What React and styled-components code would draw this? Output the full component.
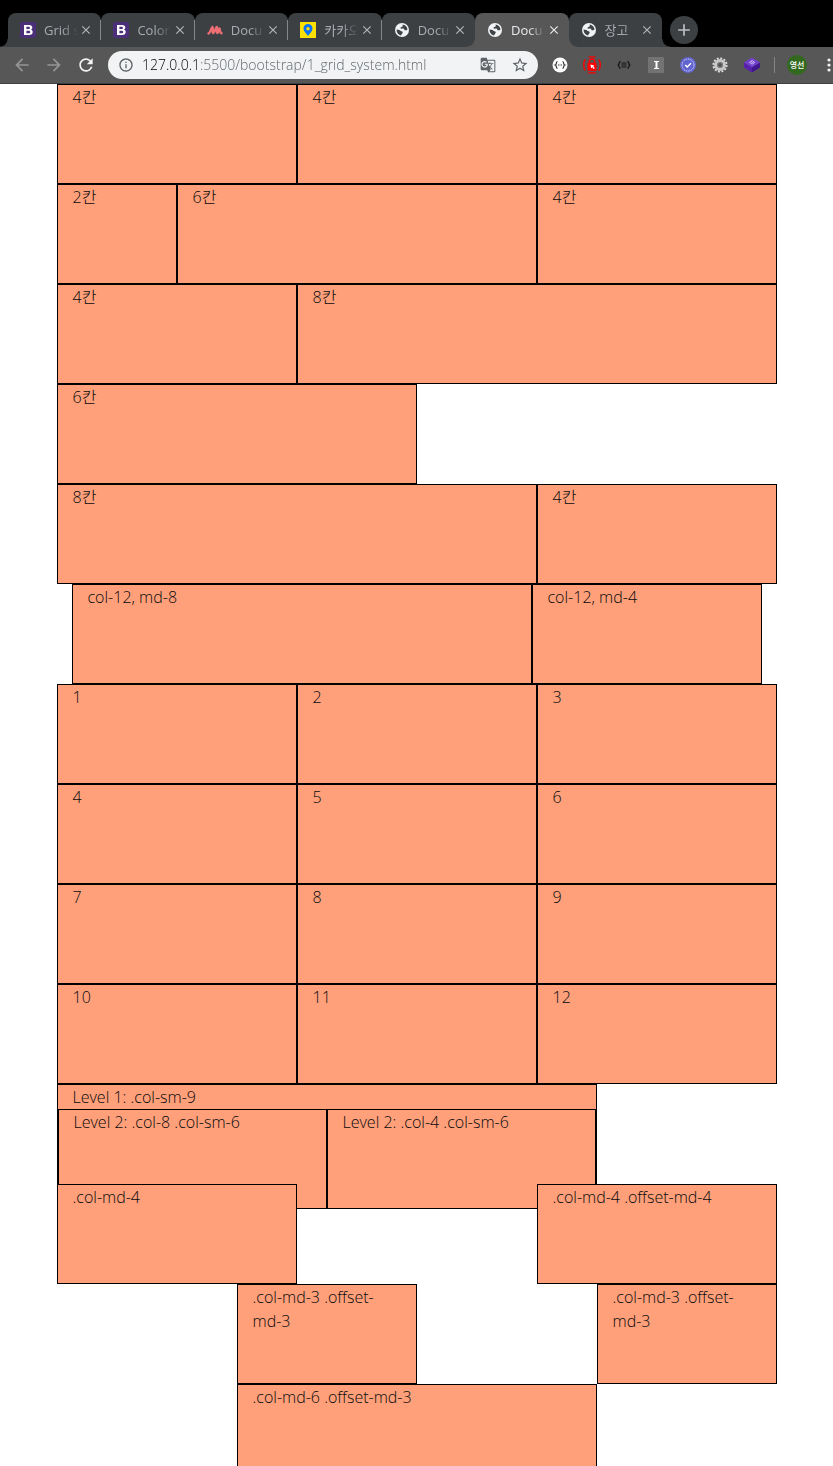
import React from "react";
import styled, { createGlobalStyle, css } from "styled-components";
import {
  MdArrowBack,
  MdArrowForward,
  MdRefresh,
  MdInfoOutline,
  MdGTranslate,
  MdStarBorder,
  MdClose,
  MdAdd,
} from "react-icons/md";

const FONT = '"Open Sans", "Noto Sans CJK KR", sans-serif';

const GlobalStyle = createGlobalStyle`
  *, *::before, *::after { box-sizing: border-box; }
  body { margin: 0; background: #fff; font-family: ${FONT}; }
  button, input { font-family: inherit; }
`;

const Window = styled.div`
  display: flex;
  flex-direction: column;
  height: 100vh;
  overflow: hidden;
`;

const TabStrip = styled.header`
  display: flex;
  flex: none;
  align-items: center;
  padding: 13px 8px 0;
  background: #000;
`;

const TabList = styled.div`
  display: flex;
  flex: 0 1 654px;
  min-width: 0;
`;

const flare = (side, color) => css`
  content: "";
  position: absolute;
  bottom: 0;
  ${side}: -8px;
  width: 8px;
  height: 8px;
  background: radial-gradient(
    circle at ${side === "left" ? "0 0" : "100% 0"},
    transparent 7px,
    ${color} 8px
  );
`;

const activeTab = css`
  z-index: 1;
  background: #575757;
  color: #e8eaed;

  &::before { ${flare("left", "#575757")} }
  &::after { ${flare("right", "#575757")} }
`;

const inactiveTab = css`
  background: #3c4043;
  color: #a9adb1;

  &:first-child::before { ${flare("left", "#3c4043")} }
  &:last-child::after { ${flare("right", "#3c4043")} }
`;

const Tab = styled.div`
  position: relative;
  display: flex;
  flex: 1 1 0;
  align-items: center;
  min-width: 0;
  height: 34px;
  padding: 0 8px 0 12px;
  border-radius: 8px 8px 0 0;
  ${(p) => (p.$active ? activeTab : inactiveTab)}
`;

const TabDivider = styled.span`
  position: absolute;
  right: 0;
  top: 7px;
  width: 1px;
  height: 20px;
  background: #85888b;
`;

const TabButton = styled.button`
  display: flex;
  flex: 1;
  align-items: center;
  gap: 8px;
  min-width: 0;
  padding: 0;
  border: 0;
  background: none;
  color: inherit;
  font-size: 13px;
  line-height: 18px;
  svg { flex: none; }
`;

const TabTitle = styled.span`
  flex: 1;
  overflow: hidden;
  white-space: nowrap;
  text-align: left;
  mask-image: linear-gradient(90deg, #000 18px, transparent 34px);
`;

const CloseButton = styled.button`
  display: flex;
  flex: none;
  padding: 0;
  border: 0;
  background: none;
  color: ${(p) => (p.$active ? "#e8eaed" : "#b4b7ba")};
`;

const NewTabButton = styled.button`
  display: flex;
  flex: none;
  align-items: center;
  justify-content: center;
  width: 28px;
  height: 28px;
  margin-left: 8px;
  padding: 0;
  border: 0;
  border-radius: 50%;
  background: #3c4043;
  color: #bdc1c6;
`;

const Toolbar = styled.nav`
  display: flex;
  flex: none;
  align-items: center;
  height: 37px;
  padding-left: 6px;
  border-bottom: 1px solid #404040;
  background: #575757;
`;

const ToolButton = styled.button`
  display: flex;
  flex: none;
  align-items: center;
  justify-content: center;
  width: 32px;
  height: 28px;
  padding: 0;
  border: 0;
  background: none;
  color: ${(p) => (p.$muted ? "#959595" : "#f1f3f4")};
`;

const AddressBar = styled.label`
  display: flex;
  flex: 1;
  align-items: center;
  min-width: 0;
  height: 28px;
  margin: 0 6px;
  padding: 0 2px 0 10px;
  border-radius: 14px;
  background: #f1f3f4;
  color: #5f6368;
`;

const AddressInput = styled.input`
  flex: 1;
  min-width: 0;
  margin-left: 8px;
  padding: 0;
  border: 0;
  outline: 0;
  background: linear-gradient(90deg, #000 56px, #5a5f64 56px);
  background-clip: text;
  -webkit-text-fill-color: transparent;
  font-size: 14px;
  font-weight: 300;
  line-height: 20px;
`;

const ToolDivider = styled.span`
  flex: none;
  width: 1px;
  height: 16px;
  margin: 0 6px;
  background: #858585;
`;

const Avatar = styled.span`
  display: flex;
  align-items: center;
  justify-content: center;
  width: 20px;
  height: 20px;
  border-radius: 50%;
  background: #33691e;
  color: #fff;
  font-size: 8px;
  font-weight: 500;
  line-height: 12px;
`;

const MenuButton = styled(ToolButton)`
  justify-content: flex-end;
  width: 20px;
`;

const Viewport = styled.main`
  flex: 1;
  min-height: 0;
  overflow: auto;
  scrollbar-width: none;
`;

const Container = styled.div`
  max-width: 720px;
  margin: 0 auto;
`;

const Row = styled.div`
  display: flex;
  flex-wrap: wrap;
  padding: 0 ${(p) => (p.$inset ? "15px" : "0")};
`;

const NestedRow = styled(Row)`
  margin: 0 -15px;
`;

const Col = styled.div`
  position: relative;
  flex: 0 0 ${(p) => (p.$span / 12) * 100}%;
  height: 100px;
  margin-left: ${(p) => ((p.$offset || 0) / 12) * 100}%;
  padding: 0 15px;
  border: 1px solid #000;
  background: #ffa07a;
  color: #080a0c;
  font-size: 16px;
  font-weight: 300;
  line-height: 24px;
`;

const BootstrapIcon = () => (
  <svg width="16" height="16" viewBox="0 0 16 16">
    <rect width="16" height="16" rx="2" fill="#4b2f78" />
    <path
      fill="#fff"
      fillRule="evenodd"
      d="M4 3h5c2.200 0 3.300 1 3.300 2.600 0 1-.5 1.700-1.400 2.100 1.200.3 1.800 1.200 1.800 2.400C12.700 12 11.400 13 9.200 13H4zm2.400 1.800v2.200h2c1 0 1.500-.4 1.500-1.100S9.400 4.800 8.500 4.800zm0 3.900v2.500h2.300c1 0 1.500-.5 1.500-1.300 0-.8-.6-1.200-1.600-1.200z"
    />
  </svg>
);

const WaveIcon = () => (
  <svg width="16" height="16" viewBox="0 0 16 16" fill="none" stroke="#ee6e73" strokeWidth="2.400" strokeLinecap="round" strokeLinejoin="round">
    <path d="M1.500 11.500C3.500 11 4 6 5.500 5c1 1-.7 5.500.7 6 1.800-.5 2-5 3.600-6 1.200 1-.7 5.500.6 6 1-.2 1-3.500 2-4.500.9.800.2 4.500 2.100 4.800" />
  </svg>
);

const MapIcon = () => (
  <svg width="16" height="16" viewBox="0 0 16 16">
    <rect width="16" height="16" fill="#fde003" />
    <path fill="#0b72f5" fillRule="evenodd" d="M8 2a4.500 4.500 0 0 1 4.500 4.500C12.500 9.500 10 11 8 14 6 11 3.500 9.500 3.500 6.500A4.500 4.500 0 0 1 8 2zm0 3a1.700 1.700 0 1 0 0 3.400A1.700 1.700 0 0 0 8 5z" />
  </svg>
);

const GlobeIcon = () => (
  <svg width="16" height="16" viewBox="0 0 16 16">
    <circle cx="8" cy="8" r="7" fill="#f1f3f4" />
    <path fill="#3f4347" d="M8.500 2.600c2.600.2 4.700 2.200 5 4.800-.8.900-1.900 1.200-2.700.8-.7-.4-.4-1.100-1.100-1.500-.8-.4-2 .3-2.900-.2-.7-.5-.1-1.400.7-1.600.9-.2 1.400-.4 1.300-1.100zM2.600 7.400c1 .2 1.900.1 2.800.6.8.4 1.200 1.100 2.100 1.300 1 .2 1.500.8 1.100 1.600-.4.700-1.100.8-1.400 2.500-2.700-.4-4.700-2.900-4.600-6z" />
  </svg>
);

const JsonIcon = () => (
  <svg width="16" height="16" viewBox="0 0 16 16">
    <circle cx="8" cy="8" r="7.500" fill="#fff" />
    <path d="M5.500 4.500C3.800 4.500 5 7.500 3.300 8 5 8.500 3.800 11.500 5.500 11.500M10.500 4.500c1.700 0 .5 3 2.200 3.500-1.700.5-.5 3.500-2.200 3.500" fill="none" stroke="#333" strokeWidth="1.200" />
    <path d="M6 8h1m.5 0h1m.5 0h1" stroke="#333" />
  </svg>
);

const LockIcon = () => (
  <svg width="18" height="18" viewBox="0 0 16 16" fill="none" stroke="#f00">
    <path d="M2 3C.2 5.800.2 10.200 2 13M14 3c1.800 2.800 1.800 7.200 0 10" strokeWidth="1.200" />
    <path d="M5 .8h6M4.500 15h7" strokeWidth="1.200" />
    <path d="M5.700 6V4.700c0-2.700 4.600-2.700 4.600 0V6" strokeWidth="1.400" />
    <rect x="4" y="6" width="8" height="7.200" fill="#f00" stroke="none" />
    <path d="M6.500 7.500 10 8.500l-.8.800 1.300 1.500-1 .8-1.200-1.500-1 .8z" fill="#fff" stroke="none" />
  </svg>
);

const BracesIcon = () => (
  <svg width="16" height="16" viewBox="0 0 16 16" fill="none" stroke="#161616" strokeWidth="1.300">
    <path d="M4.500 4.500C2.500 4.500 4 7.500 1.800 8c2.200.5.7 3.500 2.700 3.500M11.500 4.500c2 0 .5 3 2.700 3.500-2.200.5-.7 3.500-2.700 3.500" />
    <path d="M5.500 6h5M5.500 8h5M5.500 10h5" strokeWidth="1" />
  </svg>
);

const SerifIcon = () => (
  <svg width="16" height="16" viewBox="0 0 16 16">
    <rect width="16" height="16" rx="1" fill="#737373" />
    <path d="M6 4h5v1H9.500v6H11v1H6v-1h1.500V5H6z" fill="#fff" />
  </svg>
);

const CheckIcon = () => (
  <svg width="16" height="16" viewBox="0 0 16 16" fill="none">
    <circle cx="8" cy="8" r="8" fill="#6264cf" />
    <circle cx="8" cy="8" r="6" stroke="#d5d6f5" strokeDasharray="1.500 1" />
    <path d="m5.200 8 2 2L11 6.300" stroke="#fff" strokeWidth="1.500" />
  </svg>
);

const GearIcon = () => (
  <svg width="16" height="16" viewBox="0 0 16 16" fill="none">
    <circle cx="8" cy="8" r="6.600" stroke="#d9d9d9" strokeWidth="2" strokeDasharray="2 1.456" />
    <circle cx="8" cy="8" r="4.500" stroke="#c7c7c7" strokeWidth="3" />
    <circle cx="8" cy="8" r="2.500" fill="#555" stroke="#888" />
  </svg>
);

const CubeIcon = () => (
  <svg width="16" height="16" viewBox="0 0 16 16">
    <path d="m8 .5 8 5-8 5-8-5z" fill="#7440ce" />
    <path d="m0 5.500 8 5v5l-8-5z" fill="#5720ad" />
    <path d="m16 5.500-8 5v5l8-5z" fill="#421590" />
    <path d="m5.500 5.500 2.700-2 2.500 1.700-2.500 2zM7 4.500l2.500 1.800" fill="none" stroke="#cdb6f3" />
  </svg>
);

const DotsIcon = () => (
  <svg width="8" height="16" viewBox="0 0 8 16" fill="currentColor">
    <circle cx="4" cy="3" r="1.600" />
    <circle cx="4" cy="8" r="1.600" />
    <circle cx="4" cy="13" r="1.600" />
  </svg>
);

const tabs = [
  { title: "Grid s", icon: BootstrapIcon, divider: true },
  { title: "Color", icon: BootstrapIcon, divider: true },
  { title: "Docu", icon: WaveIcon, divider: true },
  { title: "카카오", icon: MapIcon, divider: true },
  { title: "Docu", icon: GlobeIcon },
  { title: "Docu", icon: GlobeIcon, active: true },
  { title: "장고", icon: GlobeIcon },
];

const extensions = [
  ["JSON viewer", JsonIcon],
  ["Lock", LockIcon],
  ["Formatter", BracesIcon],
  ["Reader", SerifIcon],
  ["Checker", CheckIcon],
  ["Options", GearIcon],
  ["Cube", CubeIcon],
];

const upperRows = [
  [[4, "4칸"], [4, "4칸"], [4, "4칸"]],
  [[2, "2칸"], [6, "6칸"], [4, "4칸"]],
  [[4, "4칸"], [8, "8칸"]],
  [[6, "6칸"]],
  [[8, "8칸"], [4, "4칸"]],
];

const lowerRows = [
  [[4, ".col-md-4"], [4, ".col-md-4 .offset-md-4", 4]],
  [[3, ".col-md-3 .offset-md-3", 3], [3, ".col-md-3 .offset-md-3", 3]],
  [[6, ".col-md-6 .offset-md-3", 3]],
];

const GridRow = ({ cols, inset }) => (
  <Row $inset={inset}>
    {cols.map(([span, text, offset], i) => (
      <Col key={i} $span={span} $offset={offset}>
        {text}
      </Col>
    ))}
  </Row>
);

export default function App() {
  return (
    <Window>
      <GlobalStyle />
      <TabStrip>
        <TabList>
          {tabs.map(({ title, icon: Icon, active, divider }, i) => (
            <Tab key={i} $active={active}>
              <TabButton type="button">
                <Icon />
                <TabTitle>{title}</TabTitle>
              </TabButton>
              <CloseButton type="button" aria-label="Close tab" $active={active}>
                <MdClose size={14} />
              </CloseButton>
              {divider && <TabDivider />}
            </Tab>
          ))}
        </TabList>
        <NewTabButton type="button" aria-label="New tab">
          <MdAdd size={20} />
        </NewTabButton>
      </TabStrip>
      <Toolbar>
        <ToolButton type="button" aria-label="Back" $muted>
          <MdArrowBack size={20} />
        </ToolButton>
        <ToolButton type="button" aria-label="Forward" $muted>
          <MdArrowForward size={20} />
        </ToolButton>
        <ToolButton type="button" aria-label="Reload">
          <MdRefresh size={20} />
        </ToolButton>
        <AddressBar>
          <MdInfoOutline size={16} />
          <AddressInput
            aria-label="Address"
            defaultValue="127.0.0.1:5500/bootstrap/1_grid_system.html"
            spellCheck={false}
          />
          <ToolButton as="span">
            <MdGTranslate size={16} color="#5f6368" />
          </ToolButton>
          <ToolButton as="span">
            <MdStarBorder size={18} color="#5f6368" />
          </ToolButton>
        </AddressBar>
        {extensions.map(([name, Icon]) => (
          <ToolButton key={name} type="button" aria-label={name}>
            <Icon />
          </ToolButton>
        ))}
        <ToolDivider />
        <ToolButton type="button">
          <Avatar>영선</Avatar>
        </ToolButton>
        <MenuButton type="button" aria-label="Menu">
          <DotsIcon />
        </MenuButton>
      </Toolbar>
      <Viewport>
        <Container>
          {upperRows.map((cols, i) => (
            <GridRow key={i} cols={cols} />
          ))}
          <GridRow inset cols={[[8, "col-12, md-8"], [4, "col-12, md-4"]]} />
          <GridRow cols={Array.from({ length: 12 }, (_, i) => [4, i + 1])} />
          <Row>
            <Col $span={9}>
              Level 1: .col-sm-9
              <NestedRow>
                <Col $span={6}>Level 2: .col-8 .col-sm-6</Col>
                <Col $span={6}>Level 2: .col-4 .col-sm-6</Col>
              </NestedRow>
            </Col>
          </Row>
          {lowerRows.map((cols, i) => (
            <GridRow key={i} cols={cols} />
          ))}
        </Container>
      </Viewport>
    </Window>
  );
}
